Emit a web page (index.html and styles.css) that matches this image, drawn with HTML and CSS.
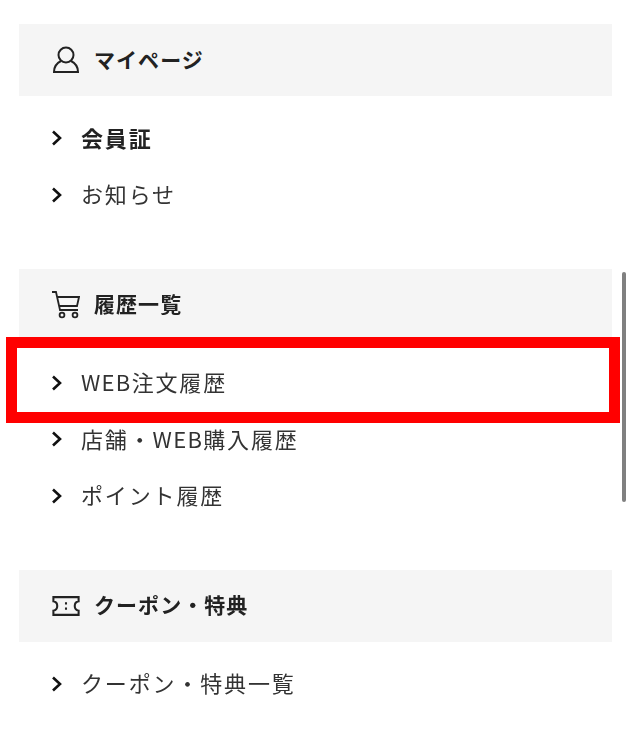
FILE: index.html
```html
<!DOCTYPE html>
<html lang="ja">
<head>
    <meta charset="UTF-8">
    <meta name="viewport" content="width=device-width, initial-scale=1.0">
    <title>マイページ</title>
    <link rel="stylesheet" href="styles.css">
</head>
<body>
    <div class="menu">
        <section class="section">
            <h2 class="section-head">
                <svg class="head-icon" viewBox="0 0 28 28" fill="none" stroke="#222" stroke-width="2">
                    <circle cx="14" cy="9" r="7.5"/>
                    <path d="M9 15 C5 17 2 21 2 26 H26 C26 21 23 17 19 15"/>
                </svg>
                <span>マイページ</span>
            </h2>
            <ul class="links">
                <li class="link current"><svg class="chev" viewBox="0 0 12 16"><path d="M3 1.5 L10 8 L3 14.5"/></svg><span>会員証</span></li>
                <li class="link"><svg class="chev" viewBox="0 0 12 16"><path d="M3 1.5 L10 8 L3 14.5"/></svg><span>お知らせ</span></li>
            </ul>
        </section>
        <section class="section">
            <h2 class="section-head">
                <svg class="head-icon" viewBox="0 0 28 28" fill="none" stroke="#222" stroke-width="1.8">
                    <path d="M0 1 H4 L8 19 H26"/>
                    <path d="M5 6 H27 L25 15 H7"/>
                    <circle cx="10" cy="24" r="2.4"/>
                    <circle cx="23" cy="24" r="2.4"/>
                </svg>
                <span>履歴一覧</span>
            </h2>
            <ul class="links">
                <li class="link"><svg class="chev" viewBox="0 0 12 16"><path d="M3 1.5 L10 8 L3 14.5"/></svg><span><span class="latin">WEB</span>注文履歴</span></li>
                <li class="link"><svg class="chev" viewBox="0 0 12 16"><path d="M3 1.5 L10 8 L3 14.5"/></svg><span>店舗・<span class="latin">WEB</span>購入履歴</span></li>
                <li class="link"><svg class="chev" viewBox="0 0 12 16"><path d="M3 1.5 L10 8 L3 14.5"/></svg><span>ポイント履歴</span></li>
            </ul>
        </section>
        <section class="section">
            <h2 class="section-head">
                <svg class="head-icon" viewBox="0 0 30 22" fill="none" stroke="#222" stroke-width="2.2">
                    <path d="M1.5 1.5 H28.5 V6 C23 7 23 15 28.5 16 V20.5 H1.5 V16 C7 15 7 7 1.5 6 Z"/>
                    <path d="M15 7 V9.5 M15 12.5 V15"/>
                </svg>
                <span>クーポン・特典</span>
            </h2>
            <ul class="links">
                <li class="link"><svg class="chev" viewBox="0 0 12 16"><path d="M3 1.5 L10 8 L3 14.5"/></svg><span>クーポン・特典一覧</span></li>
            </ul>
        </section>
        <div class="highlight"></div>
        <div class="scrollbar"></div>
    </div>
</body>
</html>
```

FILE: styles.css
```css
/* ベース */
html, body {
    margin: 0;
    padding: 0;
    background: #fff;
}
body {
    font-family: "Noto Sans CJK JP", "Noto Sans", sans-serif;
    color: #333;
    overflow: hidden;
}
.menu {
    position: relative;
    height: 745px;
    padding: 24px 19px 0;
    box-sizing: border-box;
    filter: blur(0.4px);
}
.section {
    margin-bottom: 45.5px;
}
.section-head {
    display: flex;
    align-items: center;
    height: 72px;
    margin: 0;
    padding-left: 33px;
    background: #f5f5f5;
    color: #222;
    font-size: 21px;
    font-weight: 700;
    letter-spacing: 1.05px;
}
.section-head span {
    margin-bottom: 3px;
}
.head-icon {
    width: 28px;
    height: 28px;
    margin-right: 14px;
}
.links {
    list-style: none;
    margin: 14px 0 0;
    padding: 0;
}
.link {
    display: flex;
    align-items: center;
    height: 56.5px;
    padding-left: 31px;
    font-size: 22px;
    letter-spacing: 1.85px;
}
.link > span {
    margin-bottom: 3px;
}
.latin {
    letter-spacing: 1.3px;
}
.link.current {
    font-weight: 700;
    color: #222;
}
.chev {
    width: 12px;
    height: 16px;
    margin-right: 19px;
    fill: none;
    stroke: #111;
    stroke-width: 2.6;
}
/* 赤枠 */
.highlight {
    position: absolute;
    left: 6px;
    top: 337px;
    width: 614px;
    height: 86px;
    box-sizing: border-box;
    border: 11px solid #f00;
}
.scrollbar {
    position: absolute;
    left: 622px;
    top: 272px;
    width: 4px;
    height: 230px;
    border-radius: 2px;
    background: #808080;
}
```
